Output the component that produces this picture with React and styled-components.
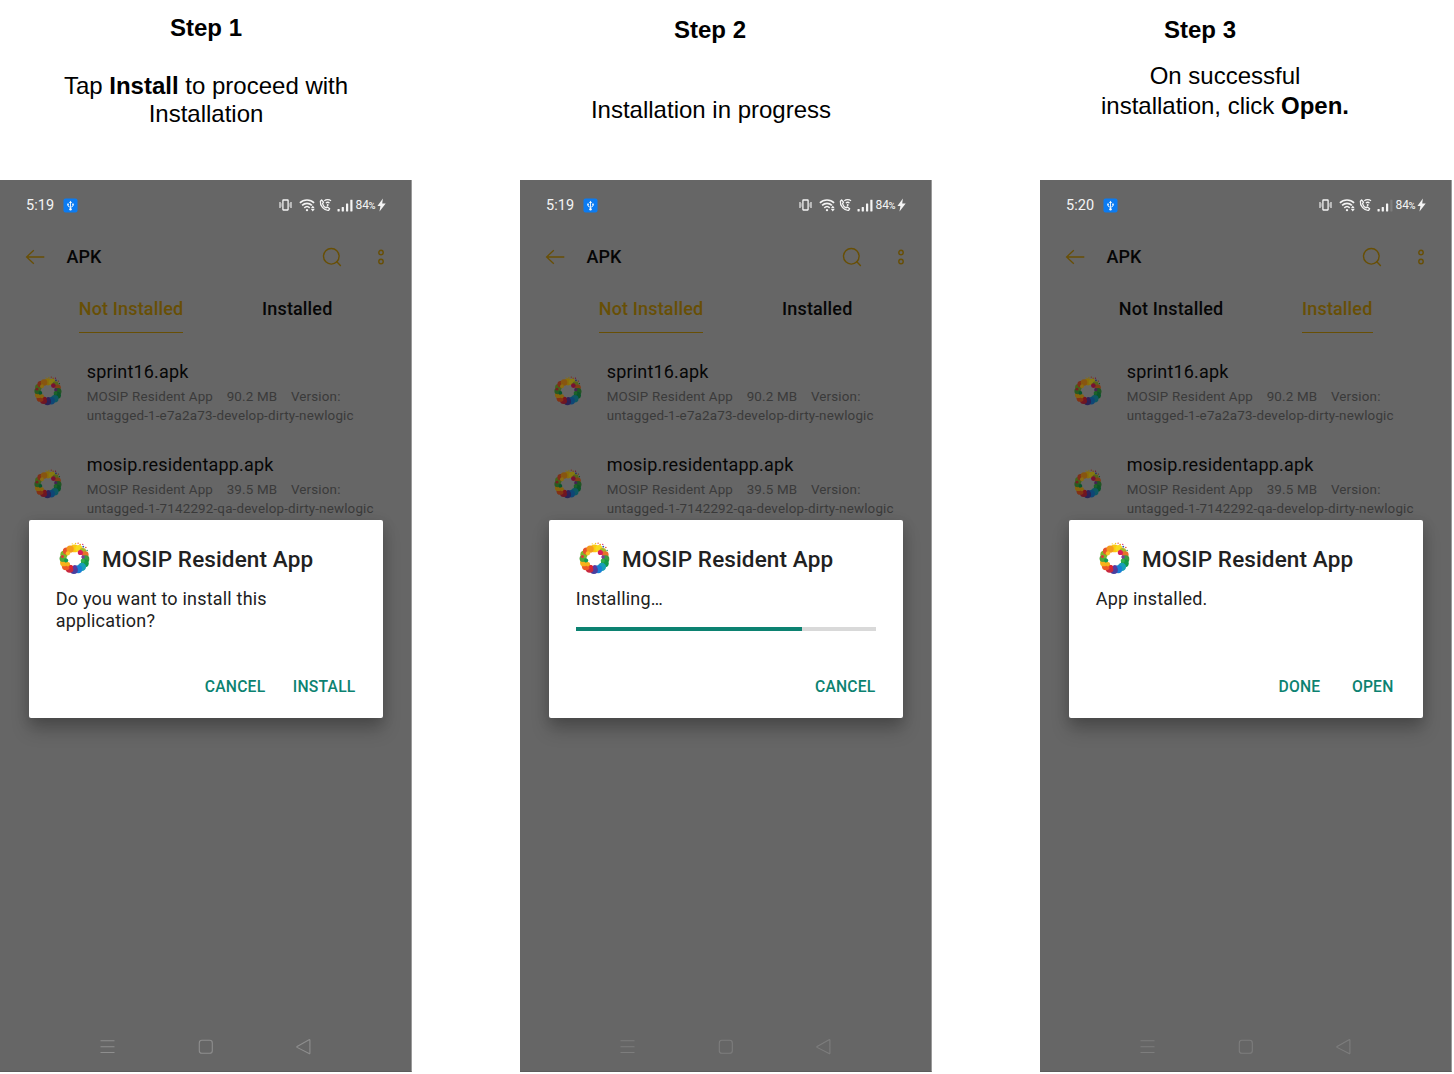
import React from 'react';
import styled, { createGlobalStyle } from 'styled-components';

const GOLD = '#684f05';
const TEAL = '#0c8271';

const GlobalStyle = createGlobalStyle`
  body { margin: 0; background: #fff; overflow: hidden; }
  *, *::before, *::after { box-sizing: border-box; }
  svg { display: block; flex: none; }
`;

const Page = styled.main`
  display: grid;
  grid-template-columns: repeat(3, 412px);
  column-gap: 108px;
  width: 1454px;
  height: 1074px;
  overflow: hidden;
`;

const Column = styled.section`
  display: flex;
  flex-direction: column;
`;

const StepHeader = styled.header`
  height: 180px;
  padding-top: ${(p) => p.$top}px;
  font: 24px/28px "Liberation Sans", Arial, sans-serif;
  color: #000;
  text-align: center;
`;

const StepTitle = styled.h2`
  margin: 0 ${(p) => p.$inset}px 0 0;
  font-size: 24px;
  font-weight: 700;
`;

const StepText = styled.p`
  margin: ${(p) => p.$gap}px ${(p) => p.$inset}px 0 0;
  line-height: ${(p) => p.$leading}px;
  white-space: nowrap;
`;

const Phone = styled.div`
  position: relative;
  display: flex;
  flex-direction: column;
  width: 412px;
  height: 892px;
  background: #666;
  border-right: 1px solid #9a9a9a;
  border-bottom: 1px solid #5c5c5c;
  font-family: Roboto, sans-serif;
  color: #060606;
`;

const StatusBar = styled.div`
  display: flex;
  align-items: center;
  height: 50px;
  padding: 0 25px 0 26px;
  color: #f4f4f4;
`;

const Clock = styled.span`
  width: 37px;
  padding-top: 1px;
  font-size: 14.5px;
  letter-spacing: 0.05px;
`;

const StatusIcons = styled.div`
  display: flex;
  align-items: center;
  margin-left: auto;
`;

const Battery = styled.span`
  margin: 0 1.5px 0 2.5px;
  font-size: 12px;
  letter-spacing: -0.1px;
  small { font-size: 9.5px; font-weight: 500; margin-left: -0.2px; }
`;

const AppBar = styled.div`
  display: flex;
  align-items: center;
  height: 54px;
  padding: 0 26.5px 0 25px;
  color: ${GOLD};
`;

const AppBarTitle = styled.h3`
  flex: 1;
  margin: 0 0 0 21.5px;
  padding-bottom: 1px;
  font-size: 18px;
  font-weight: 500;
  color: #060606;
`;

const Tabs = styled.div`
  display: flex;
  gap: 79px;
  height: 49px;
  padding-left: 79px;
`;

const Tab = styled.div`
  width: ${(p) => p.$width}px;
  line-height: 50px;
  font-size: 18px;
  font-weight: 500;
  letter-spacing: 0.15px;
  white-space: nowrap;
  display: flex;
  justify-content: center;
  color: ${(p) => (p.$active ? GOLD : '#060606')};
  border-bottom: 1.5px solid ${(p) => (p.$active ? GOLD : 'transparent')};
`;

const FileList = styled.div`
  display: flex;
  flex-direction: column;
  padding-top: 12px;
`;

const FileRow = styled.div`
  display: flex;
  height: 93px;
  padding-left: 33px;
`;

const FileIcon = styled.div`
  width: 53.7px;
  padding-top: 31px;
  filter: brightness(0.55);
`;

const FileInfo = styled.div`
  padding-top: 16px;
  white-space: nowrap;
`;

const FileName = styled.div`
  font-size: 18px;
  line-height: 22px;
  letter-spacing: 0.18px;
  margin-bottom: 5px;
`;

const FileMeta = styled.div`
  display: flex;
  gap: 13.6px;
  font-size: 13.4px;
  line-height: 18.5px;
  letter-spacing: 0.17px;
  color: #3a3a3a;
`;

const NavBar = styled.div`
  display: flex;
  justify-content: space-between;
  align-items: center;
  height: 49px;
  margin-top: auto;
  padding: 0 99px 0 99px;
  color: ${(p) => p.$color};
`;

const Dialog = styled.div`
  position: absolute;
  left: 28.5px;
  top: 339.5px;
  width: 354.5px;
  height: 198.5px;
  display: flex;
  flex-direction: column;
  padding: 19px 27.5px 20px 27px;
  background: #fff;
  border-radius: 2px;
  box-shadow: 0 12px 18px rgba(0, 0, 0, 0.22), 0 3px 14px rgba(0, 0, 0, 0.14);
  color: #212121;
`;

const DialogHead = styled.div`
  display: flex;
  align-items: center;
  gap: 11px;
  height: 40px;
  padding-left: 2.5px;
`;

const DialogTitle = styled.h3`
  margin: 0;
  font-size: 22.5px;
  font-weight: 500;
  letter-spacing: 0.12px;
  white-space: nowrap;
`;

const Message = styled.p`
  margin: 9px 0 0 0.3px;
  font-size: 18px;
  line-height: 22px;
  letter-spacing: 0.2px;
`;

const Track = styled.div`
  height: 4.5px;
  margin: 17px 0 0 0.5px;
  background: #d9d9d9;
`;

const Fill = styled.div`
  height: 100%;
  background: ${TEAL};
`;

const Actions = styled.div`
  display: flex;
  justify-content: flex-end;
  gap: ${(p) => p.$gap}px;
  margin: auto ${(p) => p.$inset || 0}px 0 0;
`;

const Action = styled.button`
  padding: 0;
  border: 0;
  background: none;
  font: 500 15.7px/22px Roboto, sans-serif;
  letter-spacing: 0.2px;
  color: ${TEAL};
`;

const UsbBadge = () => (
  <svg width="15" height="15" viewBox="0 0 15 15">
    <rect x="0.5" y="0.5" width="14" height="14" rx="2" fill="#0b7bf1" />
    <path d="M7.5 4v7M5 6v2l2.5 1.6L10 8V6" stroke="#d8ecff" fill="none" />
    <path d="M7.5 2.7 9 5H6z" fill="#fff" />
    <circle cx="7.5" cy="11.2" r="1.2" fill="#fff" />
    <path d="M4.2 5.6h1.7v1.6H4.2zM9.1 5.6h1.7v1.6H9.1z" fill="#d8ecff" />
  </svg>
);

const VibrateIcon = () => (
  <svg width="13" height="14" viewBox="0 0 13 14" fill="none" stroke="currentColor">
    <rect x="3.9" y="2" width="5.2" height="10" rx="0.4" strokeWidth="1.3" />
    <path d="M1 4v6M12 4v6" strokeWidth="1.1" />
    <path d="M2.2 5.2v3.6M10.8 5.2v3.6" strokeWidth="0.5" />
  </svg>
);

const WifiIcon = () => (
  <svg width="17" height="14" viewBox="0 0 17 14" fill="none" stroke="currentColor" strokeWidth="1.6">
    <path d="M0.9 4.9C4.7 1.1 11.3 1.1 15.1 4.9" />
    <path d="M3.1 7.4C5.9 4.7 10.1 4.7 12.9 7.4" />
    <path d="M5.3 9.8C6.9 8.3 9.1 8.3 10.7 9.8" />
    <circle cx="8" cy="12.1" r="1.2" fill="currentColor" stroke="none" />
    <path d="M11.9 10.2 13.8 7.6 15.7 10.2zM11.9 11h3.8l-1.9 2.5z" fill="currentColor" stroke="none" />
  </svg>
);

const WifiCallIcon = () => (
  <svg width="13" height="14" viewBox="0 0 13 14" fill="none" stroke="currentColor">
    <path
      d="M1.4 3.3 2.6 2 4.5 4.2 3.5 5.6C4.1 7.7 5.2 9 7 9.9L8.4 8.9 10.7 10.7 9.6 12.3C5.4 12.9 0.7 7.7 1.4 3.3z"
      strokeWidth="1.3"
      strokeLinejoin="round"
    />
    <path d="M5.3 2.9C7 1.3 10.3 1.3 12 2.9M6.9 5.1C7.9 4.1 9.5 4.1 10.5 5.1" strokeWidth="1.3" />
    <circle cx="8.7" cy="6.9" r="1" fill="currentColor" stroke="none" />
  </svg>
);

const SignalIcon = ({ bars }) => (
  <svg width="16" height="13" viewBox="0 0 16 13" fill="currentColor">
    <rect x="0.5" y="9.9" width="2.2" height="2.5" rx="0.4" />
    <rect x="4.7" y="7.9" width="2.2" height="4.5" rx="0.4" />
    <rect x="9" y="4.6" width="2.2" height="7.8" rx="0.4" />
    <rect x="13.3" y="0.7" width="2.2" height="11.7" rx="0.4" opacity={bars > 3 ? 1 : 0.16} />
  </svg>
);

const BoltIcon = () => (
  <svg width="9" height="14" viewBox="0 0 9 14" fill="currentColor">
    <path d="M5.9 0.5 0.4 8h3L2.5 13.6 8.7 5.6H5.2z" />
  </svg>
);

const BackIcon = () => (
  <svg width="20" height="16" viewBox="0 0 20 16" fill="none" stroke="currentColor" strokeWidth="1.3">
    <path d="M19.3 8H2M8.8 1.2 1.6 8l7.2 6.8" />
  </svg>
);

const SearchIcon = () => (
  <svg width="20" height="20" viewBox="0 0 20 20" fill="none" stroke="currentColor" strokeWidth="1.4">
    <circle cx="9.3" cy="9.3" r="7.8" />
    <path d="m14.8 14.8 3.6 3.6" strokeLinecap="round" />
  </svg>
);

const MoreIcon = styled(({ className }) => (
  <svg className={className} width="8" height="16" viewBox="0 0 8 16" fill="none" stroke="currentColor" strokeWidth="1.4">
    <circle cx="4" cy="3.5" r="2.2" />
    <circle cx="4" cy="12.5" r="2.2" />
  </svg>
))`
  margin-left: 34.5px;
`;

const MenuIcon = () => (
  <svg width="17" height="17" viewBox="0 0 17 17" stroke="currentColor" strokeWidth="1.1">
    <path d="M1.5 2.7h14M1.5 8.7h14M1.5 14.5h14" />
  </svg>
);

const HomeIcon = () => (
  <svg width="17" height="17" viewBox="0 0 17 17" fill="none" stroke="currentColor" strokeWidth="1.1">
    <rect x="2.3" y="2.3" width="13" height="13" rx="2.6" />
  </svg>
);

const TriangleIcon = () => (
  <svg width="17" height="17" viewBox="0 0 17 17" fill="none" stroke="currentColor" strokeWidth="1.1">
    <path d="M14.9 2.2v13q0 .8-.8.4L2.1 9.4q-.7-.5 0-1L14.1 1.8q.8-.4.8.4z" />
  </svg>
);

const BLOBS = [
  [16, 6.2, 3.8, '#fbc814'],
  [20.3, 6.4, 3.4, '#f5dc1e'],
  [24, 9, 3.3, '#a3b82c'],
  [26.4, 12.3, 3.3, '#e8702a'],
  [26.8, 16.4, 3.6, '#3c9b41'],
  [26, 20.6, 3.8, '#12994a'],
  [23.2, 24.2, 4, '#18a0b5'],
  [19.6, 26.4, 3.9, '#1a7fd6'],
  [15.4, 27.2, 3.9, '#4a3f9f'],
  [11.3, 26, 3.8, '#c9283f'],
  [7.7, 23.6, 3.9, '#ee5a24'],
  [5.6, 20, 3.6, '#f7b21a'],
  [4.9, 16, 3.4, '#4fa63c'],
  [5.8, 12, 3.5, '#7cb52c'],
  [8.2, 8.8, 3.5, '#e5532d'],
  [11.8, 6.9, 3.5, '#f59a1e'],
  [21.7, 10.2, 2.5, '#d81e5b'],
  [9.6, 11, 2.1, '#f9c423'],
  [7.9, 18, 2, '#139a51'],
  [24.3, 14.6, 1.7, '#7b3f9a'],
  [9.6, 21.6, 2.1, '#f3b21c'],
  [16.3, 24.4, 2, '#5b3aa0'],
  [12.6, 24, 1.8, '#e0252f'],
  [24, 18.2, 2, '#35b049'],
  [4.3, 14, 1.5, '#d8373a'],
];

const SPARKS = [
  [17, 1.4, 0.7, '#f2c71a'],
  [19.5, 1.1, 0.7, '#e5432d'],
  [21.5, 2.4, 0.8, '#f08a1d'],
  [24, 2.3, 0.7, '#d81e5b'],
  [24.5, 4.5, 0.9, '#3a55a8'],
  [27, 5.4, 0.7, '#e5432d'],
  [28.2, 8.2, 0.7, '#12994a'],
  [13.8, 1.8, 0.6, '#f7d01e'],
];

const RingLogo = ({ size }) => (
  <svg width={size} height={size} viewBox="0 0 32 32">
    {BLOBS.concat(SPARKS).map(([x, y, r, fill], i) => (
      <circle key={i} cx={x} cy={y} r={r} fill={fill} />
    ))}
  </svg>
);

const FILES = [
  { name: 'sprint16.apk', size: '90.2 MB', version: 'untagged-1-e7a2a73-develop-dirty-newlogic' },
  { name: 'mosip.residentapp.apk', size: '39.5 MB', version: 'untagged-1-7142292-qa-develop-dirty-newlogic' },
];

const Spacer = styled.span`
  width: ${(p) => p.$w}px;
`;

const PhoneScreen = ({ time, bars = 4, installedTab = false, navColor = '#7d7d7d', children }) => (
  <Phone>
    <StatusBar>
      <Clock>{time}</Clock>
      <UsbBadge />
      <StatusIcons>
        <VibrateIcon />
        <Spacer $w={7} />
        <WifiIcon />
        <Spacer $w={3} />
        <WifiCallIcon />
        <Spacer $w={5} />
        <SignalIcon bars={bars} />
        <Battery>84<small>%</small></Battery>
        <BoltIcon />
      </StatusIcons>
    </StatusBar>
    <AppBar>
      <BackIcon />
      <AppBarTitle>APK</AppBarTitle>
      <SearchIcon />
      <MoreIcon />
    </AppBar>
    <Tabs>
      <Tab $width={104} $active={!installedTab}>Not Installed</Tab>
      <Tab $width={70.5} $active={installedTab}>Installed</Tab>
    </Tabs>
    <FileList>
      {FILES.map((f) => (
        <FileRow key={f.name}>
          <FileIcon><RingLogo size={30} /></FileIcon>
          <FileInfo>
            <FileName>{f.name}</FileName>
            <FileMeta>
              <span>MOSIP Resident App</span>
              <span>{f.size}</span>
              <span>Version:</span>
            </FileMeta>
            <FileMeta>{f.version}</FileMeta>
          </FileInfo>
        </FileRow>
      ))}
    </FileList>
    <NavBar $color={navColor}>
      <MenuIcon />
      <HomeIcon />
      <TriangleIcon />
    </NavBar>
    <Dialog>
      <DialogHead>
        <RingLogo size={33} />
        <DialogTitle>MOSIP Resident App</DialogTitle>
      </DialogHead>
      {children}
    </Dialog>
  </Phone>
);

export default function App() {
  return (
    <>
      <GlobalStyle />
      <Page>
        <Column>
          <StepHeader $top={14}>
            <StepTitle $inset={0}>Step 1</StepTitle>
            <StepText $gap={30} $inset={0} $leading={28}>
              Tap <b>Install</b> to proceed with<br />Installation
            </StepText>
          </StepHeader>
          <PhoneScreen time="5:19" navColor="#8e8e8e">
            <Message>Do you want to install this<br />application?</Message>
            <Actions $gap={27.5}>
              <Action>CANCEL</Action>
              <Action>INSTALL</Action>
            </Actions>
          </PhoneScreen>
        </Column>
        <Column>
          <StepHeader $top={16}>
            <StepTitle $inset={32}>Step 2</StepTitle>
            <StepText $gap={52} $inset={30} $leading={28}>Installation in progress</StepText>
          </StepHeader>
          <PhoneScreen time="5:19">
            <Message>Installing…</Message>
            <Track>
              <Fill style={{ width: `${(226 / 300) * 100}%` }} />
            </Track>
            <Actions>
              <Action>CANCEL</Action>
            </Actions>
          </PhoneScreen>
        </Column>
        <Column>
          <StepHeader $top={16}>
            <StepTitle $inset={92}>Step 3</StepTitle>
            <StepText $gap={17} $inset={42} $leading={30}>
              On successful<br />installation, click <b>Open.</b>
            </StepText>
          </StepHeader>
          <PhoneScreen time="5:20" bars={3} installedTab>
            <Message>App installed.</Message>
            <Actions $gap={31.5} $inset={2}>
              <Action>DONE</Action>
              <Action>OPEN</Action>
            </Actions>
          </PhoneScreen>
        </Column>
      </Page>
    </>
  );
}
